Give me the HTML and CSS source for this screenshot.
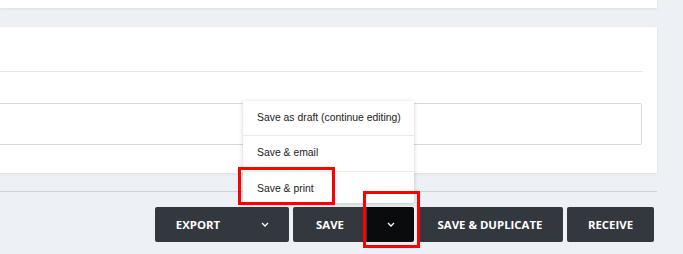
FILE: index.html
```html
<!DOCTYPE html>
<html lang="en">
<head>
  <meta charset="utf-8" />
  <title>Invoice - Save</title>
  <link rel="stylesheet" href="styles.css">
</head>
<body>
  <div class="page">
    <div class="card card-top"></div>

    <div class="card card-notes">
      <div class="card-head"></div>
      <div class="notes-box"></div>
    </div>

    <div class="actions">
      <div class="btn-group">
        <button class="btn btn-main btn-export">EXPORT</button>
        <button class="btn btn-caret"><svg width="8" height="5" viewBox="0 0 8 5"><path d="M1 1l3 3 3-3" fill="none" stroke="#fff" stroke-width="1.3"/></svg></button>
      </div>

      <div class="btn-group save-group">
        <button class="btn btn-main btn-save">SAVE</button>
        <button class="btn btn-caret active"><svg width="8" height="5" viewBox="0 0 8 5"><path d="M1 1l3 3 3-3" fill="none" stroke="#fff" stroke-width="1.3"/></svg></button>

        <ul class="menu">
          <li>Save as draft (continue editing)</li>
          <li>Save &amp; email</li>
          <li>Save &amp; print<span class="mark mark-print"></span></li>
        </ul>

        <span class="mark mark-caret"></span>
      </div>

      <button class="btn btn-dup">SAVE &amp; DUPLICATE</button>
      <button class="btn btn-receive">RECEIVE</button>
    </div>
  </div>
</body>
</html>
```

FILE: styles.css
```css
body {
  margin: 0;
  background-color: #edf0f5;
  font-family: 'Liberation Sans', Arial, sans-serif;
  color: #222;
}

.page {
  width: 657px;
}

.card {
  background-color: #fff;
  box-shadow: 0 1px 3px rgba(0, 0, 0, 0.08);
}

.card-top {
  height: 8px;
}

.card-notes {
  margin-top: 19px;
  height: 146px;
  padding-right: 14px;
  box-sizing: border-box;
}

.card-head {
  height: 44px;
  border-bottom: 1px solid #e6e9ea;
}

.notes-box {
  margin-top: 31px;
  margin-right: 1px;
  height: 40px;
  border: 1px solid #cfdbd8;
  border-left: none;
  border-radius: 0 2px 2px 0;
}

.actions {
  margin-top: 18px;
  border-top: 1px solid #cfd2d8;
  padding-top: 15px;
  padding-bottom: 12px;
  display: flex;
  justify-content: flex-end;
  gap: 4px;
  padding-right: 3px;
}

.btn-group {
  display: flex;
  position: relative;
}

.btn {
  height: 35px;
  border: none;
  border-radius: 2px;
  background-color: #33373e;
  color: #fff;
  font-family: 'Open Sans', sans-serif;
  font-weight: 700;
  font-size: 11.4px;
  padding: 0 20px;
  cursor: pointer;
}

.btn-main {
  border-radius: 2px 0 0 2px;
}

.btn-export {
  width: 86px;
}

.btn-save {
  width: 74px;
}

.btn-caret {
  width: 48px;
  padding: 0;
  border-radius: 0 2px 2px 0;
  display: flex;
  align-items: center;
  justify-content: center;
}

.btn-caret.active {
  width: 47px;
  background-color: #0a0b0d;
}

.btn-dup {
  width: 146px;
  padding: 0;
  margin-left: -1px;
}

.btn-receive {
  width: 87px;
  padding: 0;
}

.menu {
  position: absolute;
  z-index: 1;
  right: 0;
  bottom: 39px;
  width: 171px;
  margin: 0;
  padding: 0;
  list-style: none;
  background-color: #fff;
  border-radius: 2px;
  box-shadow: 0 1px 5px rgba(0, 0, 0, 0.18);
  font-size: 10.4px;
}

.menu li {
  position: relative;
  height: 35px;
  line-height: 34px;
  padding-left: 14px;
  border-top: 1px solid #e8eaec;
}

.menu li:first-child {
  border-top: none;
  height: 34px;
}

.menu li:last-child {
  height: 31px;
  line-height: 33px;
}

/* red annotation boxes */
.mark {
  position: absolute;
  z-index: 2;
  border: 3px solid #f00;
  box-sizing: border-box;
}

.mark-print {
  left: -5px;
  top: -5px;
  width: 97px;
  height: 38px;
}

.mark-caret {
  left: 70px;
  top: -16px;
  width: 57px;
  height: 57px;
}
```
